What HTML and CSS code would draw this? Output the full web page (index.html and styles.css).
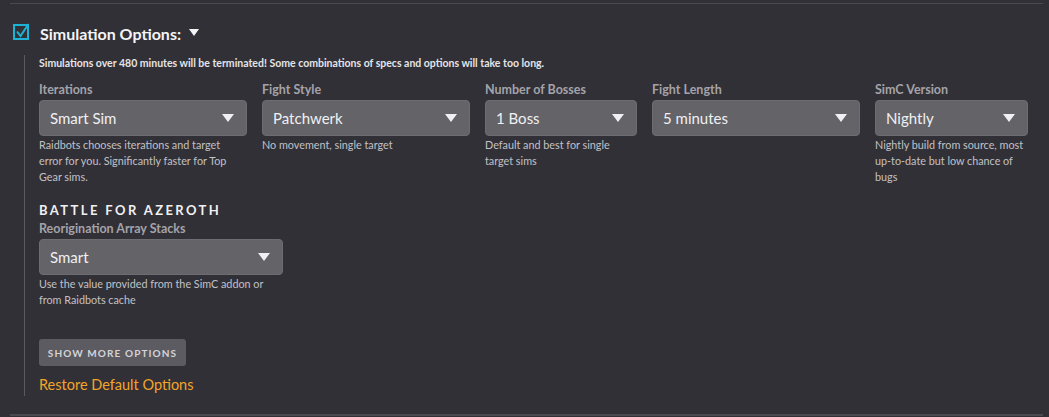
FILE: index.html
```html
<!DOCTYPE html>
<html>
<head>
<meta charset="utf-8">
<link rel="stylesheet" href="styles.css">
</head>
<body>
<div class="panel">
  <div class="header">
    <svg class="check" width="17" height="17" viewBox="0 0 17 17">
      <rect x="1" y="2" width="14" height="14" fill="none" stroke="#1cb3d4" stroke-width="2"/>
      <path d="M4 8.5 L7.5 13 L15.5 1" fill="none" stroke="#1cb3d4" stroke-width="2"/>
    </svg>
    <span class="title">Simulation Options:</span>
    <i class="caret"></i>
  </div>
  <div class="body">
    <p class="warn">Simulations over 480 minutes will be terminated! Some combinations of specs and options will take too long.</p>
    <div class="row">
      <div class="field w208">
        <div class="label">Iterations</div>
        <div class="select"><span>Smart Sim</span><i class="arrow"></i></div>
        <div class="help">Raidbots chooses iterations and target error for you. Significantly faster for Top Gear sims.</div>
      </div>
      <div class="field w208">
        <div class="label">Fight Style</div>
        <div class="select"><span>Patchwerk</span><i class="arrow"></i></div>
        <div class="help">No movement, single target</div>
      </div>
      <div class="field w152">
        <div class="label">Number of Bosses</div>
        <div class="select"><span>1 Boss</span><i class="arrow"></i></div>
        <div class="help">Default and best for single target sims</div>
      </div>
      <div class="field w208">
        <div class="label">Fight Length</div>
        <div class="select"><span>5 minutes</span><i class="arrow"></i></div>
      </div>
      <div class="field w153">
        <div class="label">SimC Version</div>
        <div class="select"><span>Nightly</span><i class="arrow"></i></div>
        <div class="help">Nightly build from source, most up-to-date but low chance of bugs</div>
      </div>
    </div>
    <h3 class="section">BATTLE FOR AZEROTH</h3>
    <div class="field w244">
      <div class="label">Reorigination Array Stacks</div>
      <div class="select"><span>Smart</span><i class="arrow"></i></div>
      <div class="help">Use the value provided from the SimC addon or from Raidbots cache</div>
    </div>
    <button class="more">SHOW MORE OPTIONS</button>
    <a class="restore">Restore Default Options</a>
  </div>
</div>
</body>
</html>
```
FILE: styles.css
```css
html, body {
  margin: 0;
  padding: 0;
  background: #313036;
  font-family: Lato, "Open Sans", sans-serif;
  color: #e6e6e8;
}
.panel {
  margin: 3px 6px 0 10px;
  border-top: 1px solid #4a494f;
  border-bottom: 2px solid #4a494f;
  height: 410px;
}
.header {
  display: flex;
  align-items: center;
  height: 51px;
  padding-left: 3px;
  padding-top: 7px;
  box-sizing: border-box;
}
.check {
  display: block;
  margin-right: 10px;
  margin-top: -3px;
}
.title {
  font-weight: 700;
  font-size: 16px;
  color: #f4f4f6;
}
.caret {
  width: 0;
  height: 0;
  margin-left: 8px;
  margin-top: -2px;
  border-left: 5px solid transparent;
  border-right: 5px solid transparent;
  border-top: 7px solid #f4f4f6;
}
.body {
  margin-left: 14px;
  border-left: 1px solid #5a5960;
  padding-left: 14px;
  height: 341px;
}
.warn {
  margin: 0;
  padding-top: 1px;
  font-size: 10.5px;
  font-weight: 700;
  color: #e4e4e6;
  line-height: 14px;
}
.row {
  display: flex;
  gap: 15px;
  margin-top: 12px;
}
.field { display: flex; flex-direction: column; }
.w208 { width: 208px; }
.w152 { width: 152px; }
.w153 { width: 153px; }
.w244 { width: 244px; }
.label {
  font-size: 12.5px;
  font-weight: 700;
  color: #a4a3a9;
  line-height: 16px;
  margin-bottom: 2px;
}
.select {
  height: 36px;
  background: #646368;
  border: 1px solid #6d6c71;
  border-radius: 4px;
  box-sizing: border-box;
  display: flex;
  align-items: center;
  justify-content: space-between;
  padding: 0 12px 0 10px;
  font-size: 15px;
  color: #f0f0f2;
}
.arrow {
  width: 0;
  height: 0;
  border-left: 6px solid transparent;
  border-right: 6px solid transparent;
  border-top: 8px solid #f0f0f2;
}
.help {
  font-size: 10.8px;
  line-height: 16px;
  color: #c2c1c6;
  margin-top: 1px;
  padding-right: 4px;
}
.section {
  margin: 17px 0 0 0;
  font-size: 13px;
  font-weight: 700;
  letter-spacing: 2.4px;
  color: #f0f0f2;
  line-height: 16px;
}
.section + .field .label { margin-top: 3px; }
.more {
  display: block;
  margin-top: 31px;
  height: 27px;
  width: 147px;
  border: none;
  border-radius: 3px;
  background: #5c5b61;
  color: #d4d4d8;
  font-family: Lato, sans-serif;
  font-size: 10px;
  font-weight: 700;
  letter-spacing: 1.1px;
  padding: 0;
}
.restore {
  display: block;
  margin-top: 10px;
  font-size: 14.5px;
  line-height: 18px;
  color: #f3a52a;
}
```
